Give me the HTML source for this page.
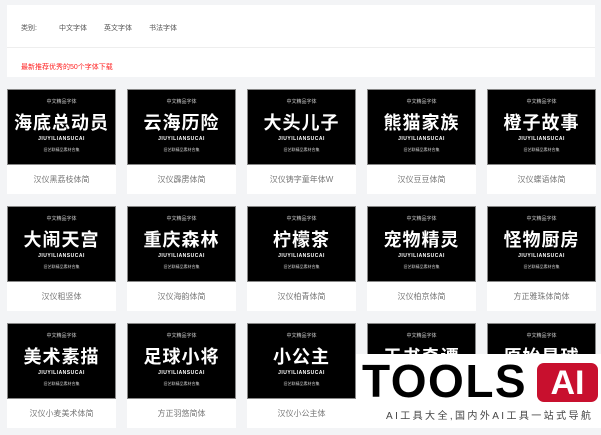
<!DOCTYPE html><html><head><meta charset="utf-8"><style>
*{margin:0;padding:0;box-sizing:border-box}
body{width:601px;height:435px;overflow:hidden;background:#f3f4f6;font-family:"Liberation Sans","Noto Sans CJK SC",sans-serif;position:relative}
.panel{position:absolute;left:7px;top:5px;width:588px;height:72px;background:#fff}
.nav{position:absolute;top:18px;font-size:7px;color:#555}
.hr{position:absolute;left:0;right:0;top:42px;border-top:1px solid #eee}
.red{position:absolute;left:14px;top:57px;font-size:7px;color:#f22}
.card{position:absolute;width:109px;height:105px;background:#fff}
.img{height:76px;background:#000;border:1px solid #888;color:#fff;text-align:center;position:relative}
.t1{font-size:5px;position:absolute;top:8px;width:100%;color:#ccc}
.big{font-size:18px;font-weight:bold;position:absolute;top:20px;width:100%;letter-spacing:1px;font-family:"Noto Sans CJK SC",sans-serif;line-height:24px}
.en{font-size:5px;position:absolute;top:46px;width:100%;letter-spacing:.5px;font-weight:bold}
.sm{font-size:4px;position:absolute;top:57px;width:100%;color:#ccc}
.cap{font-size:8px;color:#777;text-align:center;line-height:29px}
.ov{position:absolute;left:356px;top:354px;width:245px;height:74px;background:#fff}
</style></head><body>
<div class="panel">
<span class="nav" style="left:14px">类别:</span>
<span class="nav" style="left:52px">中文字体</span>
<span class="nav" style="left:97px">英文字体</span>
<span class="nav" style="left:142px">书法字体</span>
<div class="hr"></div>
<span class="red">最新推荐优秀的50个字体下载</span>
</div>
<div class="card" style="left:7px;top:89px"><div class="img"><div class="t1">中文精品字体</div><div class="big">海底总动员</div><div class="en">JIUYILIANSUCAI</div><div class="sm">旧艺联精品素材合集</div></div><div class="cap">汉仪黑荔枝体简</div></div>
<div class="card" style="left:127px;top:89px"><div class="img"><div class="t1">中文精品字体</div><div class="big">云海历险</div><div class="en">JIUYILIANSUCAI</div><div class="sm">旧艺联精品素材合集</div></div><div class="cap">汉仪霹雳体简</div></div>
<div class="card" style="left:247px;top:89px"><div class="img"><div class="t1">中文精品字体</div><div class="big">大头儿子</div><div class="en">JIUYILIANSUCAI</div><div class="sm">旧艺联精品素材合集</div></div><div class="cap">汉仪铸字童年体W</div></div>
<div class="card" style="left:367px;top:89px"><div class="img"><div class="t1">中文精品字体</div><div class="big">熊猫家族</div><div class="en">JIUYILIANSUCAI</div><div class="sm">旧艺联精品素材合集</div></div><div class="cap">汉仪豆豆体简</div></div>
<div class="card" style="left:487px;top:89px"><div class="img"><div class="t1">中文精品字体</div><div class="big">橙子故事</div><div class="en">JIUYILIANSUCAI</div><div class="sm">旧艺联精品素材合集</div></div><div class="cap">汉仪蝶语体简</div></div>
<div class="card" style="left:7px;top:206px"><div class="img"><div class="t1">中文精品字体</div><div class="big">大闹天宫</div><div class="en">JIUYILIANSUCAI</div><div class="sm">旧艺联精品素材合集</div></div><div class="cap">汉仪粗竖体</div></div>
<div class="card" style="left:127px;top:206px"><div class="img"><div class="t1">中文精品字体</div><div class="big">重庆森林</div><div class="en">JIUYILIANSUCAI</div><div class="sm">旧艺联精品素材合集</div></div><div class="cap">汉仪海韵体简</div></div>
<div class="card" style="left:247px;top:206px"><div class="img"><div class="t1">中文精品字体</div><div class="big">柠檬茶</div><div class="en">JIUYILIANSUCAI</div><div class="sm">旧艺联精品素材合集</div></div><div class="cap">汉仪柏青体简</div></div>
<div class="card" style="left:367px;top:206px"><div class="img"><div class="t1">中文精品字体</div><div class="big">宠物精灵</div><div class="en">JIUYILIANSUCAI</div><div class="sm">旧艺联精品素材合集</div></div><div class="cap">汉仪柏京体简</div></div>
<div class="card" style="left:487px;top:206px"><div class="img"><div class="t1">中文精品字体</div><div class="big">怪物厨房</div><div class="en">JIUYILIANSUCAI</div><div class="sm">旧艺联精品素材合集</div></div><div class="cap">方正雅珠体简体</div></div>
<div class="card" style="left:7px;top:323px"><div class="img"><div class="t1">中文精品字体</div><div class="big">美术素描</div><div class="en">JIUYILIANSUCAI</div><div class="sm">旧艺联精品素材合集</div></div><div class="cap">汉仪小麦美术体简</div></div>
<div class="card" style="left:127px;top:323px"><div class="img"><div class="t1">中文精品字体</div><div class="big">足球小将</div><div class="en">JIUYILIANSUCAI</div><div class="sm">旧艺联精品素材合集</div></div><div class="cap">方正羽悠简体</div></div>
<div class="card" style="left:247px;top:323px"><div class="img"><div class="t1">中文精品字体</div><div class="big">小公主</div><div class="en">JIUYILIANSUCAI</div><div class="sm">旧艺联精品素材合集</div></div><div class="cap">汉仪小公主体</div></div>
<div class="card" style="left:367px;top:323px"><div class="img"><div class="t1">中文精品字体</div><div class="big">天书奇谭</div></div></div>
<div class="card" style="left:487px;top:323px"><div class="img"><div class="t1">中文精品字体</div><div class="big">原始星球</div></div></div>
<div class="ov">
<div style="position:absolute;left:6px;top:3px;font-size:46px;font-weight:bold;color:#000;letter-spacing:1.5px;line-height:48px">TOOLS</div>
<div style="position:absolute;left:181px;top:9px;width:61px;height:39px;background:#c8102e;border-radius:7px;color:#fff;font-size:34px;font-weight:bold;text-align:center;line-height:40px">AI</div>
<div style="position:absolute;left:30px;top:53px;font-size:10px;color:#444;letter-spacing:2.4px;white-space:nowrap">AI工具大全,国内外AI工具一站式导航</div>
</div>
</body></html>
